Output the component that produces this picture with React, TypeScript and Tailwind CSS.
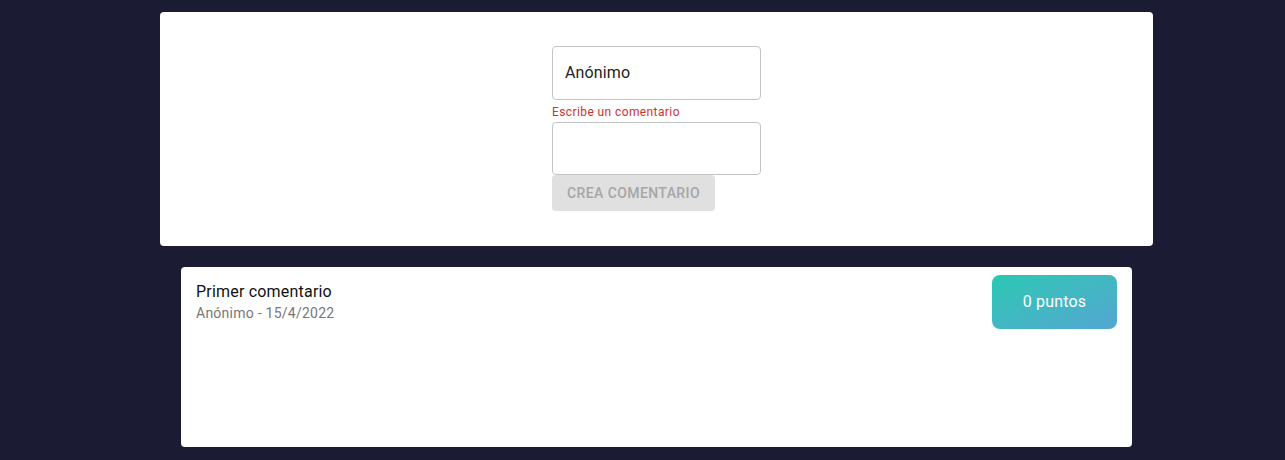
import React from 'react';

const App: React.FC = () => {
  return (
    <div className="min-h-[460px] w-full bg-[#1b1c34] font-['Roboto',sans-serif]">
      <div className="ml-[160px] flex w-[993px] flex-col pt-[12px]">
        {/* Form card */}
        <div className="flex h-[234px] flex-col items-center rounded bg-white pt-[34px]">
          <div className="flex w-[209px] flex-col">
            <div className="flex h-[54px] items-center rounded border border-[#c4c4c4] px-[12px] text-[16px] tracking-[0.15px] text-[#222]">
              Anónimo
            </div>
            <span className="mt-[4px] text-[12px] leading-[16px] tracking-[0.4px] text-[#d32f2f]">
              Escribe un comentario
            </span>
            <div className="mt-[2px] h-[53px] rounded border border-[#c4c4c4]" />
            <button
              disabled
              className="h-[36px] w-[163px] rounded bg-[#e0e0e0] text-[14px] font-medium uppercase tracking-[0.4px] text-[#a6a6a6]"
            >
              Crea comentario
            </button>
          </div>
        </div>

        {/* Comment card */}
        <div className="mx-[21px] mt-[21px] flex h-[180px] items-start justify-between rounded bg-white pl-[15px] pr-[15px] pt-[8px]">
          <div className="flex flex-col pt-[5px]">
            <span className="text-[16px] leading-[23px] tracking-[0.2px] text-[#111]">Primer comentario</span>
            <span className="text-[14px] leading-[20px] tracking-[0.25px] text-[#777]">Anónimo - 15/4/2022</span>
          </div>
          <div className="flex h-[54px] w-[125px] items-center justify-center rounded-lg bg-gradient-to-br from-[#28c8b2] to-[#52a6d2] text-[16px] tracking-[0.15px] text-white">
            0 puntos
          </div>
        </div>
      </div>
    </div>
  );
};

export default App;
